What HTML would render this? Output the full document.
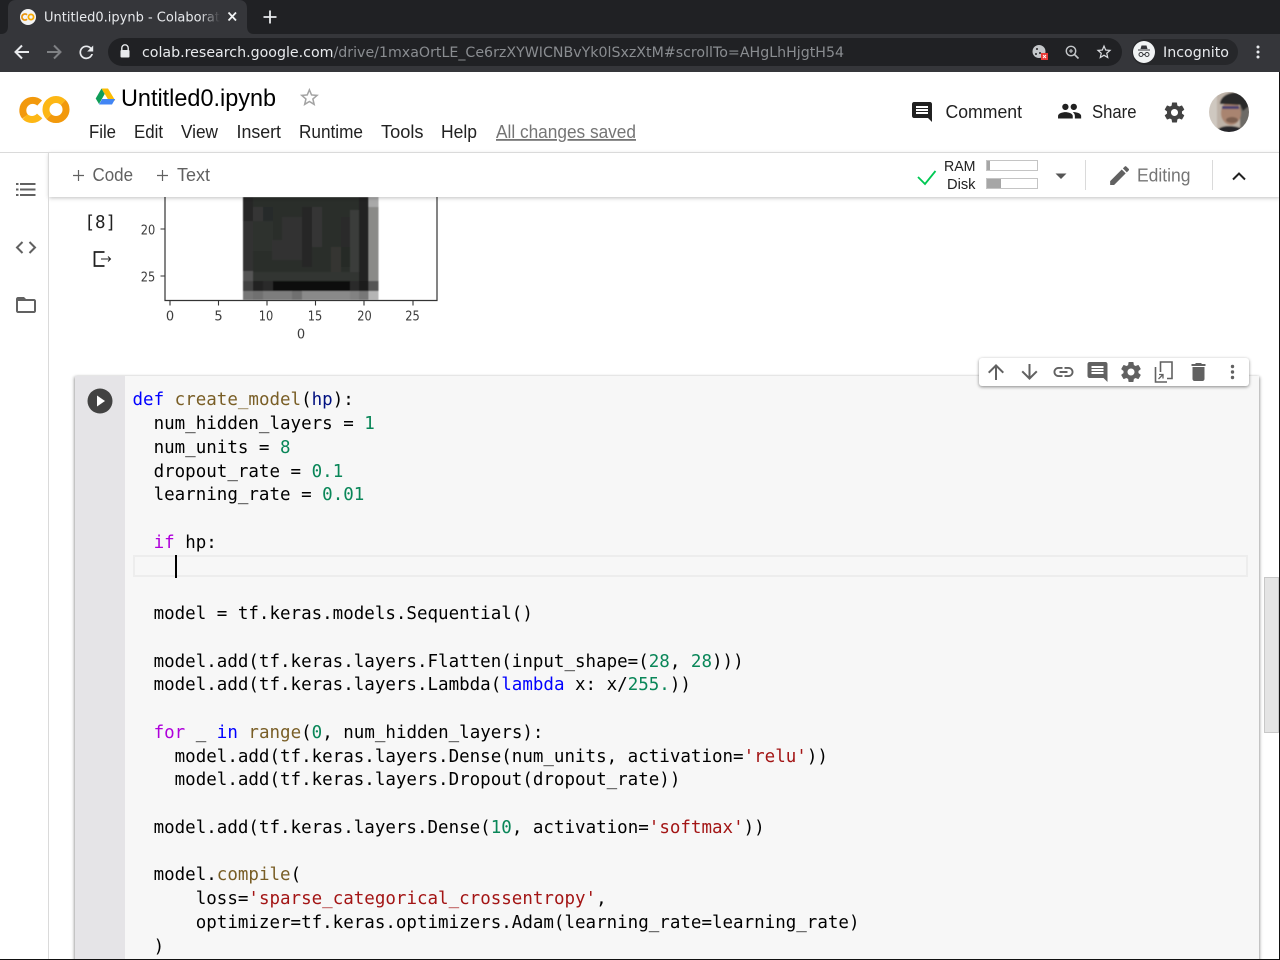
<!DOCTYPE html>
<html><head><meta charset="utf-8"><title>Untitled0.ipynb - Colaboratory</title>
<style>
html,body{margin:0;padding:0;width:1280px;height:960px;overflow:hidden;background:#fff}
#root{position:relative;width:1280px;height:960px;overflow:hidden}
svg.full{position:absolute;left:0;top:0}
.r{font-family:"Liberation Sans",sans-serif}
.d{font-family:"DejaVu Sans",sans-serif}
#cell{position:absolute;left:75px;top:376px;width:1184px;height:600px;background:#f7f7f7;box-shadow:1px 1px 3px rgba(0,0,0,.3),-1px 1px 3px rgba(0,0,0,.3)}
#gut{position:absolute;left:0;top:0;width:50px;height:600px;background:#e5e4e7}
#active{position:absolute;left:133px;top:555px;width:1111px;height:18px;border:2.5px solid #ededed}
#cursor{position:absolute;left:175px;top:555px;width:2px;height:23px;background:#000}
pre{position:absolute;left:132.500px;top:389.450px;margin:0;font:17.5px/23.75px "DejaVu Sans Mono",monospace;color:#000;white-space:pre}
.k{color:#00f}.f{color:#795e26}.v{color:#001080}.n{color:#098658}.c{color:#af00db}.s{color:#a31515}.b{color:#795e26}
#sb{position:absolute;left:1264px;top:577px;width:15px;height:156px;background:#e4e4e4;border:1px solid #c8c8c8;box-sizing:border-box}
#rl{position:absolute;left:1279px;top:72px;width:1px;height:888px;background:#111}
#bl{position:absolute;left:0;top:959px;width:1280px;height:1px;background:#111}
#side{position:absolute;left:48px;top:153px;width:1px;height:807px;background:#dadada}
#tb{position:absolute;left:49px;top:153px;width:1231px;height:44px;background:#fff;box-shadow:0 1px 4px rgba(0,0,0,.25)}
#hl{position:absolute;left:0;top:152px;width:1280px;height:1px;background:#dadada}
#celltb{position:absolute;left:979px;top:358px;width:270px;height:28px;background:#fff;border-radius:3px;box-shadow:0 1px 3px rgba(0,0,0,.45)}
</style></head><body><div id="root">

<svg class="full" width="1280" height="960" viewBox="0 0 1280 960">
<defs>
<filter id="bl1" x="-5%" y="-5%" width="110%" height="110%"><feGaussianBlur stdDeviation=".55"/></filter>
<filter id="bl2" x="-20%" y="-20%" width="140%" height="140%"><feGaussianBlur stdDeviation=".3"/></filter>
</defs>
<!-- output plot -->
<rect x="165" y="197" width="272" height="103" fill="#fff"/>
<g filter="url(#bl1)">
<rect x="243" y="197" width="135.500" height="103" fill="#2b2d2b"/>
<rect x="243" y="197" width="10" height="84" fill="#333"/>
<rect x="243" y="197" width="10" height="24" fill="#262827"/>
<rect x="253" y="207" width="10" height="14" fill="#343634"/>
<rect x="263" y="207" width="10" height="14" fill="#282b29"/>
<rect x="253" y="221" width="20" height="30" fill="#2f312f"/>
<rect x="282" y="217" width="20" height="40" fill="#323232"/>
<rect x="302" y="207" width="10" height="60" fill="#262827"/>
<rect x="312" y="207" width="10" height="40" fill="#343434"/>
<rect x="341" y="217" width="9" height="30" fill="#2a2c2a"/>
<rect x="350" y="210" width="9" height="71" fill="#3b3c3b"/>
<rect x="331" y="247" width="10" height="30" fill="#343533"/>
<rect x="341" y="247" width="9" height="20" fill="#282a28"/>
<rect x="272" y="240" width="30" height="20" fill="#333"/>
<rect x="359" y="197" width="9.500" height="84" fill="#222423"/>
<rect x="368.500" y="197" width="10" height="10" fill="#a9a9a9"/>
<rect x="368.500" y="207" width="10" height="74" fill="#8a8a88"/>
<rect x="253" y="272" width="106" height="9" fill="#323432"/>
<rect x="243" y="271" width="10" height="10" fill="#555"/>
<rect x="243" y="281" width="10" height="10" fill="#434343"/>
<rect x="253" y="281" width="10" height="10" fill="#232323"/>
<rect x="263" y="281" width="10" height="10" fill="#2c2c2c"/>
<rect x="273" y="281" width="29" height="10" fill="#111"/>
<rect x="302" y="281" width="48" height="10" fill="#0a0a0a"/>
<rect x="350" y="281" width="9" height="10" fill="#2b2b2b"/>
<rect x="359" y="281" width="9.500" height="10" fill="#1e1e1e"/>
<rect x="368.500" y="281" width="10" height="10" fill="#555"/>
<rect x="243" y="291" width="10" height="9" fill="#777"/>
<rect x="253" y="291" width="10" height="9" fill="#6f6f6f"/>
<rect x="263" y="291" width="29" height="9" fill="#7d7d7d"/>
<rect x="292" y="291" width="10" height="9" fill="#707070"/>
<rect x="302" y="291" width="48" height="9" fill="#8a8a8a"/>
<rect x="350" y="291" width="9" height="9" fill="#828282"/>
<rect x="359" y="291" width="9.500" height="9" fill="#777"/>
<rect x="368.500" y="291" width="10" height="9" fill="#b5b5b5"/>
</g>
<rect x="160" y="191" width="4" height="6" fill="#fff"/>
<path d="M165 197V300.500H437V197" fill="none" stroke="#333" stroke-width="1.200"/>
<path d="M165 229h-4.500M165 276h-4.500M170 301v4.500M218.500 301v4.500M267 301v4.500M315.500 301v4.500M364 301v4.500M413 301v4.500" stroke="#333" stroke-width="1.100" fill="none"/>
<g class="d" font-size="13" fill="#3c3c3c" text-anchor="middle" filter="url(#bl2)">
<text x="148" y="234.500" textLength="14.500" lengthAdjust="spacingAndGlyphs">20</text><text x="148" y="281.500" textLength="14.500" lengthAdjust="spacingAndGlyphs">25</text>
<text x="170" y="320.500">0</text><text x="218.500" y="320.500">5</text><text x="266" y="320.500" textLength="14.500" lengthAdjust="spacingAndGlyphs">10</text><text x="315" y="320.500" textLength="14.500" lengthAdjust="spacingAndGlyphs">15</text><text x="364.500" y="320.500" textLength="14.500" lengthAdjust="spacingAndGlyphs">20</text><text x="412.500" y="320.500" textLength="14.500" lengthAdjust="spacingAndGlyphs">25</text>
<text x="301" y="338.500">0</text></g>
<text x="84.500" y="228" font-family="'DejaVu Sans Mono',monospace" font-size="17.500" fill="#212121">[8]</text>
<path d="M104.500 252H94.500V266H104.500" fill="none" stroke="#212121" stroke-width="1.800"/>
<path d="M101 259H110.500M108 256.500L110.500 259 108 261.500" fill="none" stroke="#212121" stroke-width="1"/>
</svg>

<div id="cell"><div id="gut"></div></div>
<div id="active"></div>
<pre><span class="k">def</span> <span class="f">create_model</span>(<span class="v">hp</span>):
  num_hidden_layers = <span class="n">1</span>
  num_units = <span class="n">8</span>
  dropout_rate = <span class="n">0.1</span>
  learning_rate = <span class="n">0.01</span>

  <span class="c">if</span> hp:


  model = tf.keras.models.Sequential()

  model.add(tf.keras.layers.Flatten(input_shape=(<span class="n">28</span>, <span class="n">28</span>)))
  model.add(tf.keras.layers.Lambda(<span class="k">lambda</span> x: x/<span class="n">255.</span>))

  <span class="c">for</span> _ <span class="k">in</span> <span class="b">range</span>(<span class="n">0</span>, num_hidden_layers):
    model.add(tf.keras.layers.Dense(num_units, activation=<span class="s">'relu'</span>))
    model.add(tf.keras.layers.Dropout(dropout_rate))

  model.add(tf.keras.layers.Dense(<span class="n">10</span>, activation=<span class="s">'softmax'</span>))

  model.<span class="b">compile</span>(
      loss=<span class="s">'sparse_categorical_crossentropy'</span>,
      optimizer=tf.keras.optimizers.Adam(learning_rate=learning_rate)
  )</pre>
<div id="cursor"></div>
<div id="celltb"></div>
<div id="sb"></div>
<div id="tb"></div>
<div id="hl"></div>
<div id="side"></div>
<div id="rl"></div><div id="bl"></div>

<svg class="full" width="1280" height="960" viewBox="0 0 1280 960">
<defs>
<linearGradient id="fade" x1="0" x2="1" y1="0" y2="0"><stop offset="0" stop-color="#35363a" stop-opacity="0"/><stop offset="1" stop-color="#35363a"/></linearGradient>
<clipPath id="av"><circle cx="1229" cy="112" r="20"/></clipPath>
<filter id="avb" x="-10%" y="-10%" width="120%" height="120%"><feGaussianBlur stdDeviation=".7"/></filter>
<path id="gear" d="M19.430 12.980c.040-.320.070-.640.070-.980s-.030-.660-.070-.980l2.110-1.650c.190-.150.240-.420.120-.640l-2-3.460c-.120-.220-.390-.300-.610-.220l-2.490 1c-.520-.400-1.080-.730-1.690-.980l-.380-2.650C14.460 2.180 14.250 2 14 2h-4c-.250 0-.460.180-.490.420l-.380 2.650c-.610.250-1.170.590-1.690.980l-2.490-1c-.230-.090-.490 0-.610.220l-2 3.460c-.130.220-.070.490.120.640l2.110 1.650c-.040.320-.070.650-.070.980s.030.660.070.980l-2.110 1.650c-.190.150-.240.420-.120.640l2 3.460c.120.220.390.300.610.220l2.490-1c.520.400 1.080.730 1.690.980l.380 2.650c.030.240.240.420.490.420h4c.250 0 .460-.180.490-.420l.380-2.650c.610-.250 1.170-.590 1.690-.980l2.490 1c.230.090.490 0 .610-.220l2-3.460c.120-.220.070-.490-.120-.640l-2.110-1.650zM12 15.500c-1.930 0-3.500-1.570-3.500-3.500s1.570-3.500 3.500-3.500 3.500 1.570 3.500 3.500-1.570 3.500-3.500 3.500z"/>
<path id="cmt" d="M21.990 4c0-1.100-.890-2-1.990-2H4c-1.100 0-2 .900-2 2v12c0 1.100.900 2 2 2h14l4 4-.010-18zM18 14H6v-2h12v2zm0-3H6V9h12v2zm0-3H6V6h12v2z"/>
<path id="star" d="M22 9.240l-7.190-.620L12 2 9.190 8.630 2 9.240l5.460 4.730L5.820 21 12 17.270 18.180 21l-1.630-7.030L22 9.240zM12 15.400l-3.760 2.270 1-4.280-3.320-2.880 4.380-.380L12 6.100l1.710 4.040 4.380.380-3.320 2.880 1 4.280L12 15.400z"/>
</defs>

<!-- browser chrome -->
<rect width="1280" height="34" fill="#202124"/>
<rect y="34" width="1280" height="38" fill="#35363a"/>
<path d="M0 34h1c5 0 7-3 7-8V8c0-5 3-8 8-8h223c5 0 8 3 8 8v18c0 5 2 8 7 8z" fill="#35363a"/>
<circle cx="28" cy="17" r="8" fill="#f3f3f3"/>
<path d="M27 14.800A3 3 0 1 0 27 19.200" fill="none" stroke="#e8920c" stroke-width="1.800"/>
<circle cx="31" cy="17" r="2.600" fill="none" stroke="#f9ab00" stroke-width="1.800"/>
<text class="d" x="44" y="21.500" font-size="13" fill="#e8eaed" textLength="176" lengthAdjust="spacingAndGlyphs">Untitled0.ipynb - Colaborat</text>
<rect x="200" y="6" width="20" height="22" fill="url(#fade)"/>
<path d="M228.500 12.500l7.500 8M236 12.500l-7.500 8" stroke="#f1f3f4" stroke-width="1.800"/>
<path d="M270 10.500v13M263.500 17h13" stroke="#e8eaed" stroke-width="1.800"/>
<path d="M29 52H16M22 45.500L15.500 52l6.500 6.500" fill="none" stroke="#e8eaed" stroke-width="2"/>
<path d="M47 52H60M54 45.500L60.500 52 54 58.500" fill="none" stroke="#7f8184" stroke-width="2"/>
<g transform="translate(76 42) scale(.86)"><path d="M17.650 6.350C16.200 4.900 14.210 4 12 4c-4.420 0-7.990 3.580-7.990 8s3.570 8 7.990 8c3.730 0 6.840-2.550 7.730-6h-2.080c-.820 2.330-3.040 4-5.650 4-3.310 0-6-2.690-6-6s2.690-6 6-6c1.660 0 3.140.690 4.220 1.780L13 11h7V4l-2.350 2.350z" fill="#e8eaed"/></g>
<rect x="108" y="38" width="1014" height="28" rx="14" fill="#202124"/>
<path d="M121.800 51v-3a3.200 3.200 0 0 1 6.400 0v3" fill="none" stroke="#e8eaed" stroke-width="1.400"/>
<rect x="120.500" y="50" width="9" height="7.500" rx="1" fill="#e8eaed"/>
<text class="d" x="142" y="57" font-size="14.600" fill="#e8eaed" textLength="191.500" lengthAdjust="spacingAndGlyphs">colab.research.google.com</text>
<text class="d" x="333.500" y="57" font-size="14.600" fill="#8a8d91" textLength="510.500" lengthAdjust="spacingAndGlyphs">/drive/1mxaOrtLE_Ce6rzXYWICNBvYk0lSxzXtM#scrollTo=AHgLhHjgtH54</text>
<!-- cookie icon -->
<circle cx="1039" cy="51.500" r="6.500" fill="#c4c7ca"/>
<circle cx="1037" cy="49" r="1" fill="#202124"/><circle cx="1040" cy="53" r="1" fill="#202124"/><circle cx="1036" cy="54" r="1" fill="#202124"/>
<rect x="1041" y="53" width="7" height="7" fill="#e53935"/>
<path d="M1043 55l3 3M1046 55l-3 3" stroke="#fff" stroke-width=".9"/>
<!-- zoom -->
<circle cx="1071" cy="51" r="4.700" fill="none" stroke="#c4c7ca" stroke-width="1.400"/>
<path d="M1074.500 54.500l4 4" stroke="#c4c7ca" stroke-width="1.600"/>
<path d="M1069 51h4M1071 49v4" stroke="#c4c7ca" stroke-width="1.100"/>
<g transform="translate(1095 43) scale(.75)"><use href="#star" fill="#dadce0"/></g>
<!-- incognito -->
<rect x="1132" y="39" width="106" height="26" rx="13" fill="#26272a"/>
<circle cx="1144" cy="52" r="11" fill="#f1f3f4"/>
<path d="M1140.500 49l1-3.500h5l1 3.500zM1138 49.500h12v1h-12z" fill="#35363a"/>
<circle cx="1141" cy="54.500" r="2" fill="none" stroke="#35363a" stroke-width="1"/>
<circle cx="1147" cy="54.500" r="2" fill="none" stroke="#35363a" stroke-width="1"/>
<path d="M1143 54.500h2" stroke="#35363a" stroke-width="1"/>
<text class="d" x="1163" y="57" font-size="14.500" fill="#e8eaed" textLength="66" lengthAdjust="spacingAndGlyphs">Incognito</text>
<g fill="#e8eaed"><circle cx="1258" cy="47" r="1.500"/><circle cx="1258" cy="52" r="1.500"/><circle cx="1258" cy="57" r="1.500"/></g>

<!-- colab logo -->
<g fill="none" stroke-width="7">
<path d="M39.660 103.070A10 10 0 0 0 25 116.600" stroke="#f2990c"/>
<path d="M25 116.600A10 10 0 0 0 39.660 115.930" stroke="#fdb715"/>
<path d="M63.100 102.400A10 10 0 0 1 48.900 116.600" stroke="#f2990c"/>
<path d="M48.900 116.600A10 10 0 0 1 63.100 102.400" stroke="#fdb715"/>
</g>
<!-- drive -->
<path d="M101.500 88.500h6.500l7.200 12h-6.500z" fill="#fbbc04"/>
<path d="M101.500 88.500l3.200 5.500-5.700 10-3.300-5.500z" fill="#0f9d58"/>
<path d="M99 104.500l3.200-5.500h13l-3.200 5.500z" fill="#4285f4"/>
<text class="r" x="121" y="106" font-size="24" fill="#000" textLength="155" lengthAdjust="spacingAndGlyphs">Untitled0.ipynb</text>
<g transform="translate(298 86) scale(.95)"><use href="#star" fill="#a3a3a3"/></g>

<g class="r" font-size="18" fill="#212121">
<text x="89" y="138" textLength="27" lengthAdjust="spacingAndGlyphs">File</text>
<text x="134" y="138" textLength="29" lengthAdjust="spacingAndGlyphs">Edit</text>
<text x="181" y="138" textLength="37" lengthAdjust="spacingAndGlyphs">View</text>
<text x="236.500" y="138" textLength="44.500" lengthAdjust="spacingAndGlyphs">Insert</text>
<text x="299" y="138" textLength="64" lengthAdjust="spacingAndGlyphs">Runtime</text>
<text x="381" y="138" textLength="42.500" lengthAdjust="spacingAndGlyphs">Tools</text>
<text x="441" y="138" textLength="36" lengthAdjust="spacingAndGlyphs">Help</text>
<text x="496" y="138" fill="#757575" text-decoration="underline" textLength="140" lengthAdjust="spacingAndGlyphs">All changes saved</text>
<text x="945.500" y="118" textLength="76.500" lengthAdjust="spacingAndGlyphs">Comment</text>
<text x="1092" y="118" textLength="44.500" lengthAdjust="spacingAndGlyphs">Share</text>
</g>
<g transform="translate(910 100)"><use href="#cmt" fill="#212121"/></g>
<g transform="translate(1057 98.500) scale(1.050)"><path fill="#212121" d="M16 11c1.660 0 2.990-1.340 2.990-3S17.660 5 16 5c-1.660 0-3 1.340-3 3s1.340 3 3 3zm-8 0c1.660 0 2.990-1.340 2.990-3S9.660 5 8 5C6.340 5 5 6.340 5 8s1.340 3 3 3zm0 2c-2.330 0-7 1.170-7 3.500V19h14v-2.500c0-2.330-4.670-3.500-7-3.500zm8 0c-.290 0-.620.020-.970.050 1.160.840 1.970 1.970 1.970 3.450V19h6v-2.500c0-2.330-4.670-3.500-7-3.500z"/></g>
<g transform="translate(1162.500 100.500)"><use href="#gear" fill="#424242"/></g>
<!-- avatar -->
<g clip-path="url(#av)"><g filter="url(#avb)">
<rect x="1205" y="88" width="48" height="48" fill="#bdb2a7"/>
<rect x="1205" y="88" width="12" height="48" fill="#cfc8c0"/>
<rect x="1240" y="100" width="13" height="36" fill="#6d6a66"/>
<ellipse cx="1231" cy="113" rx="10" ry="12" fill="#a98470"/>
<path d="M1220 103c1-8 12-12 19-10 6 1 10 6 10 13l-6 5-3-6-20-1z" fill="#2b2b2b"/>
<rect x="1222" y="106" width="17" height="3" fill="#4b3f70"/>
<ellipse cx="1232" cy="120" rx="6" ry="3" fill="#7c5f50"/>
<path d="M1214 136c2-8 8-10 15-10s17 2 20 10z" fill="#26282a"/>
</g></g>

<!-- notebook toolbar -->
<g class="r" font-size="18" fill="#616161">
<path d="M73 175.500h11M78.500 170v11" stroke="#616161" stroke-width="1.200"/>
<text x="92.500" y="181" textLength="40.500" lengthAdjust="spacingAndGlyphs">Code</text>
<path d="M157 175.500h11M162.500 170v11" stroke="#616161" stroke-width="1.200"/>
<text x="177" y="181" textLength="33" lengthAdjust="spacingAndGlyphs">Text</text>
</g>
<path d="M918 177l7 7 10.500-13" fill="none" stroke="#00c853" stroke-width="1.800"/>
<g class="r" font-size="15" fill="#212121">
<text x="944" y="171" textLength="31.500" lengthAdjust="spacingAndGlyphs">RAM</text>
<text x="947" y="189" textLength="28.500" lengthAdjust="spacingAndGlyphs">Disk</text>
</g>
<rect x="986.500" y="160.500" width="51" height="10" fill="#fff" stroke="#c4c4c4"/>
<rect x="987" y="161" width="3" height="9" fill="#a6a6a6"/>
<rect x="986.500" y="178.500" width="51" height="10" fill="#fff" stroke="#c4c4c4"/>
<rect x="987" y="179" width="14" height="9" fill="#a6a6a6"/>
<path d="M1055.500 173.500h11l-5.500 5.500z" fill="#555"/>
<rect x="1085" y="160" width="1" height="30" fill="#dadada"/>
<g transform="translate(1107 163) scale(1.050)"><path fill="#616161" d="M3 17.250V21h3.750L17.810 9.940l-3.750-3.750L3 17.250zM20.710 7.040c.390-.390.390-1.020 0-1.410l-2.340-2.340c-.390-.390-1.020-.390-1.410 0l-1.830 1.830 3.750 3.750 1.830-1.830z"/></g>
<text class="r" x="1137" y="181.500" font-size="18" fill="#757575" textLength="53.500" lengthAdjust="spacingAndGlyphs">Editing</text>
<rect x="1212" y="160" width="1" height="30" fill="#dadada"/>
<path d="M1233 179.500l6-6 6 6" fill="none" stroke="#212121" stroke-width="2"/>

<!-- sidebar -->
<g fill="#616161">
<rect x="16" y="183" width="2.500" height="2"/><rect x="20" y="183" width="15.500" height="2"/>
<rect x="16" y="188.500" width="2.500" height="2"/><rect x="20" y="188.500" width="15.500" height="2"/>
<rect x="16" y="194" width="2.500" height="2"/><rect x="20" y="194" width="15.500" height="2"/>
</g>
<path d="M22.500 242l-5.500 5.500 5.500 5.500M29.500 242l5.500 5.500-5.500 5.500" fill="none" stroke="#616161" stroke-width="2"/>
<g transform="translate(14 293)"><path fill="#616161" d="M20 6h-8l-2-2H4c-1.100 0-1.990.900-1.990 2L2 18c0 1.100.900 2 2 2h16c1.100 0 2-.900 2-2V8c0-1.100-.900-2-2-2zm0 12H4V8h16v10z"/></g>

<!-- run button -->
<circle cx="100" cy="401" r="12.500" fill="#424242"/>
<path d="M97 395.500l8 5.500-8 5.500z" fill="#fff"/>

<!-- cell toolbar icons -->
<g fill="#616161">
<g transform="translate(984 360)"><path d="M4 12l1.410 1.410L11 7.830V20h2V7.830l5.580 5.590L20 12l-8-8-8 8z"/></g>
<g transform="translate(1017.500 360)"><path d="M20 12l-1.410-1.410L13 16.170V4h-2v12.170l-5.580-5.590L4 12l8 8 8-8z"/></g>
<g transform="translate(1051.500 360)"><path d="M3.900 12c0-1.710 1.390-3.100 3.100-3.100h4V7H7c-2.760 0-5 2.240-5 5s2.240 5 5 5h4v-1.900H7c-1.710 0-3.100-1.390-3.100-3.100zM8 13h8v-2H8v2zm9-6h-4v1.900h4c1.710 0 3.100 1.390 3.100 3.100s-1.390 3.100-3.100 3.100h-4V17h4c2.760 0 5-2.240 5-5s-2.240-5-5-5z"/></g>
<g transform="translate(1085.500 360)"><use href="#cmt"/></g>
<g transform="translate(1119 360)"><use href="#gear"/></g>
<path d="M1160.500 372v-10h11.500v16.500h-5M1155.500 367v15h11.500" fill="none" stroke="#616161" stroke-width="1.600"/>
<path d="M1158.500 379l4.500-4.500M1159 374.500h4v4" fill="none" stroke="#616161" stroke-width="1.300"/>
<g transform="translate(1186.500 360)"><path d="M6 19c0 1.100.900 2 2 2h8c1.100 0 2-.900 2-2V7H6v12zM19 4h-3.500l-1-1h-5l-1 1H5v2h14V4z"/></g>
<circle cx="1232.500" cy="366.500" r="1.700"/><circle cx="1232.500" cy="372" r="1.700"/><circle cx="1232.500" cy="377.500" r="1.700"/>
</g>
</svg>
</div></body></html>
